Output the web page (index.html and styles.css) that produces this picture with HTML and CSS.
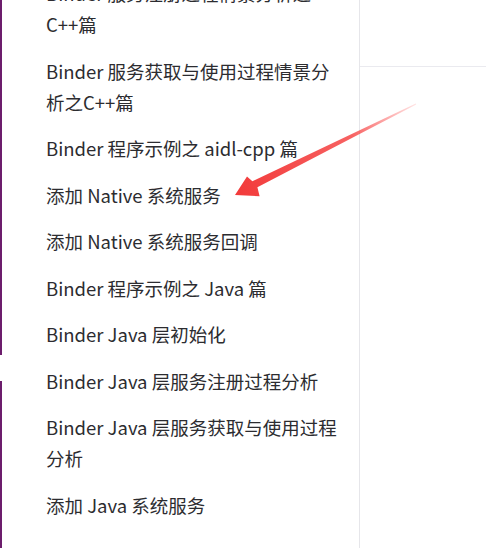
FILE: index.html
```html
<!DOCTYPE html>
<html lang="zh-CN">
<head>
<meta charset="utf-8">
<link rel="stylesheet" href="styles.css">
</head>
<body>
<div class="page">
  <div class="edge">
    <div class="edge-seg edge-top"></div>
    <div class="edge-seg edge-bottom"></div>
  </div>
  <nav class="sidebar">
    <ul class="toc">
      <li>Binder 服务注册过程情景分析之C++篇</li>
      <li>Binder 服务获取与使用过程情景分析之C++篇</li>
      <li>Binder 程序示例之 aidl-cpp 篇</li>
      <li>添加 Native 系统服务</li>
      <li>添加 Native 系统服务回调</li>
      <li>Binder 程序示例之 Java 篇</li>
      <li>Binder Java 层初始化</li>
      <li>Binder Java 层服务注册过程分析</li>
      <li>Binder Java 层服务获取与使用过程分析</li>
      <li>添加 Java 系统服务</li>
    </ul>
  </nav>
  <div class="aside">
    <div class="aside-head"></div>
  </div>
  <svg class="arrow" width="486" height="548" viewBox="0 0 486 548">
    <defs>
      <linearGradient id="ag" x1="416" y1="104" x2="235" y2="195" gradientUnits="userSpaceOnUse">
        <stop offset="0" stop-color="#ff4a4a" stop-opacity="0.15"/>
        <stop offset="0.35" stop-color="#f53b3b" stop-opacity="0.8"/>
        <stop offset="1" stop-color="#f23a3a"/>
      </linearGradient>
    </defs>
    <polygon fill="url(#ag)" points="416.2,104.4 257.4,187.3 259.6,196.2 235,195 247.0,176.6 252.4,181.2 415.8,103.6"/>
  </svg>
</div>
</body>
</html>
```
FILE: styles.css
```css
html, body {
  margin: 0;
  padding: 0;
  background: #fff;
}
.page {
  position: relative;
  display: flex;
  width: 486px;
  height: 548px;
  overflow: hidden;
}
.edge {
  display: flex;
  flex-direction: column;
  width: 2px;
  flex: 0 0 2px;
}
.edge-seg {
  background: #6c1d6c;
}
.edge-top {
  height: 355px;
}
.edge-bottom {
  margin-top: 26px;
  flex: 1;
}
.sidebar {
  flex: 0 0 358px;
  border-right: 1px solid #e6e6ea;
  box-sizing: border-box;
  padding-left: 44px;
}
.toc {
  list-style: none;
  margin: -22px 0 0;
  padding: 0;
  width: 296px;
  font-family: "Noto Sans CJK SC", "Noto Sans", sans-serif;
  font-size: 18.5px;
  line-height: 31px;
  color: #2c2c30;
}
.toc li {
  margin-bottom: 15.5px;
}
.aside {
  flex: 1;
}
.aside-head {
  height: 66px;
  border-bottom: 1px solid #eaeaef;
}
.arrow {
  position: absolute;
  left: 0;
  top: 0;
  pointer-events: none;
}
```
